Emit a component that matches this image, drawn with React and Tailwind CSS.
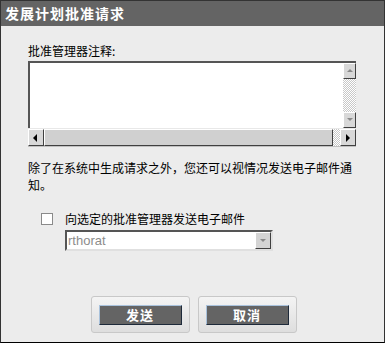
import React from "react";

const font = { fontFamily: '"Noto Sans CJK SC", "Liberation Sans", sans-serif' };

function Btn3D({ className = "", children }) {
  return (
    <div
      className={`bg-[#d8d8d8] border border-t-white border-l-white border-b-[#404040] border-r-[#404040] flex items-center justify-center ${className}`}
    >
      {children}
    </div>
  );
}

const Tri = ({ dir, color }) => {
  const pts = {
    up: "1,5 4,2 7,5",
    down: "1,2 4,5 7,2",
    left: "5,0 1,4 5,8",
    right: "2,0 6,4 2,8",
  }[dir];
  return (
    <svg width="8" height="8" viewBox="0 0 8 8">
      <polygon points={pts} fill={color} />
    </svg>
  );
};

const checker =
  "bg-[repeating-conic-gradient(#c8c8c8_0_25%,#ffffff_0_50%)] bg-[length:2px_2px]";

function ActionButton({ label }) {
  return (
    <div className="w-[99px] h-[37px] rounded-[3px] border border-[#c8c8c8] bg-gradient-to-b from-[#f4f4f4] to-[#dedede] flex items-center justify-center">
      <div className="w-[83px] h-[20px] bg-[#646464] border border-t-[#a9c2dc] border-l-[#a9c2dc] border-b-[#1e2a3a] border-r-[#1e2a3a] flex items-center justify-center text-white font-bold text-[13px] leading-none tracking-[1px]">
        {label}
      </div>
    </div>
  );
}

export default function App() {
  return (
    <div
      className="w-[385px] h-[343px] bg-[#ececec] border border-[#333] border-b-black flex flex-col text-black"
      style={font}
    >
      <div className="h-[25px] bg-[#646464] flex items-center pl-[4px] text-white font-bold text-[14px] tracking-[1px] shrink-0">
        发展计划批准请求
      </div>
      <div className="pl-[27px] flex flex-col">
        <div className="mt-[17px] text-[12px] leading-[16px] h-[16px]">批准管理器注释:</div>
        <div className="mt-[2px] w-[328px] h-[86px] flex flex-col">
          <div className="flex flex-1">
            <div className="flex-1 bg-white border-t-2 border-l-2 border-t-[#555] border-l-[#555]" />
            <div className="w-[13px] flex flex-col border-t-2 border-t-[#555] bg-white">
              <Btn3D className="h-[16px] w-[13px]">
                <Tri dir="up" color="#8a8a8a" />
              </Btn3D>
              <div className={`flex-1 ${checker}`} />
              <Btn3D className="h-[16px] w-[13px]">
                <Tri dir="down" color="#8a8a8a" />
              </Btn3D>
            </div>
          </div>
          <div className="h-[19px] flex border-t border-[#e8e8e8] border-b border-b-[#c0c0c0]">
            <Btn3D className="w-[16px]">
              <Tri dir="left" color="#000" />
            </Btn3D>
            <div className="w-[289px] bg-[#d0d0d0] border border-t-white border-l-white border-b-[#404040] border-r-[#404040]" />
            <div className={`flex-1 ${checker}`} />
            <Btn3D className="w-[16px]">
              <Tri dir="right" color="#000" />
            </Btn3D>
          </div>
        </div>
        <div className="mt-[12px] w-[340px] text-[12px] leading-[17px]">
          <div className="whitespace-nowrap">除了在系统中生成请求之外，您还可以视情况发送电子邮件通</div>
          <div>知。</div>
        </div>
        <div className="mt-[19px] flex items-center h-[14px]">
          <div className="ml-[13px] w-[12px] h-[12px] bg-white border border-[#8a8a8a]" />
          <div className="ml-[12px] text-[12px] leading-[14px]">向选定的批准管理器发送电子邮件</div>
        </div>
        <div className="mt-[4px] ml-[37px] w-[208px] h-[21px] bg-white border-2 border-t-[#555] border-l-[#555] border-b-[#e0e0e0] border-r-[#e0e0e0] flex">
          <div
            className="flex-1 text-[13px] leading-[17px] text-[#8c8c8c] pl-[1px]"
            style={{ fontFamily: '"Liberation Sans", Arial, sans-serif' }}
          >
            rthorat
          </div>
          <div className="w-[16px] bg-[#d4d4d4] border border-t-white border-l-white border-b-[#404040] border-r-[#404040] flex items-center justify-center">
            <Tri dir="down" color="#8a8a8a" />
          </div>
        </div>
      </div>
      <div className="mt-auto mb-[9px] flex justify-center gap-[8px] pl-[2px]">
        <ActionButton label="发送" />
        <ActionButton label="取消" />
      </div>
    </div>
  );
}
